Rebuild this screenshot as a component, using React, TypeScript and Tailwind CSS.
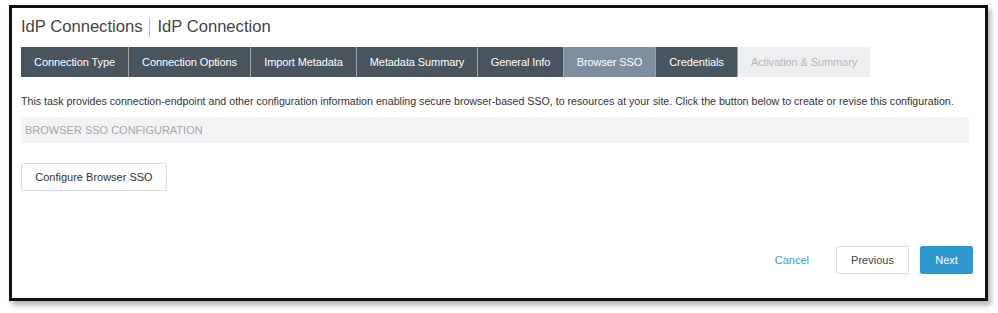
const tabs = [
  { label: "Connection Type", w: "w-[108px]", state: "done" },
  { label: "Connection Options", w: "w-[122px]", state: "done" },
  { label: "Import Metadata", w: "w-[106px]", state: "done" },
  { label: "Metadata Summary", w: "w-[121px]", state: "done" },
  { label: "General Info", w: "w-[86px]", state: "done" },
  { label: "Browser SSO", w: "w-[92px]", state: "active" },
  { label: "Credentials", w: "w-[82px]", state: "done" },
  { label: "Activation & Summary", w: "w-[132px]", state: "todo" },
];

function Tab({ label, w, state }: { label: string; w: string; state: string }) {
  const color =
    state === "active"
      ? "bg-[#7d8f9f] text-white"
      : state === "todo"
        ? "bg-[#eeeff0] text-[#b3b8bc]"
        : "bg-[#48555f] text-white";
  return (
    <div
      className={`${w} ${color} h-[30px] flex items-center justify-center text-[11px] border-r border-[#9aa3aa] last:border-r-0 tracking-[-0.1px]`}
    >
      {label}
    </div>
  );
}

export default function App() {
  return (
    <div className="w-[998px] h-[313px] bg-white font-['Liberation_Sans',Arial,sans-serif] text-[#333]">
      <div className="ml-[9px] pt-[5px]">
        <div className="w-[979px] h-[296px] border-[3px] border-[#111] bg-white shadow-[3px_4px_5px_rgba(0,0,0,0.3)] flex flex-col px-[9px] pt-[9px]">
          <div className="h-[20px] flex items-center text-[16.6px] text-[#444]">
            <span>IdP Connections</span>
            <span className="mx-[7px] w-px h-[19px] bg-[#bbb]" />
            <span>IdP Connection</span>
          </div>

          <div className="mt-[10px] flex">
            {tabs.map((t) => (
              <Tab key={t.label} {...t} />
            ))}
          </div>

          <p className="mt-[16px] h-[16px] leading-[16px] text-[10.65px] text-[#333] whitespace-nowrap">
            This task provides connection-endpoint and other configuration information enabling secure browser-based SSO, to resources at your site. Click the button below to create or revise this configuration.
          </p>

          <div className="mt-[8px] h-[26px] w-[948px] bg-[#f3f4f5] flex items-center pl-[4px] text-[11px] text-[#a4a9ad]">
            BROWSER SSO CONFIGURATION
          </div>

          <div className="mt-[20px]">
            <button className="w-[146px] h-[28px] border border-[#dcdcdc] rounded-[2px] bg-white text-[11px] text-[#333]">
              Configure Browser SSO
            </button>
          </div>

          <div className="mt-[55px] flex items-center justify-end pr-[3px]">
            <span className="text-[11px] text-[#3d9ad1] mr-[27px]">Cancel</span>
            <button className="w-[73px] h-[28px] border border-[#dcdcdc] rounded-[2px] bg-white text-[11px] text-[#444]">
              Previous
            </button>
            <button className="ml-[11px] w-[53px] h-[28px] rounded-[2px] bg-[#2d97cf] text-[11px] text-white">
              Next
            </button>
          </div>
        </div>
      </div>
    </div>
  );
}
